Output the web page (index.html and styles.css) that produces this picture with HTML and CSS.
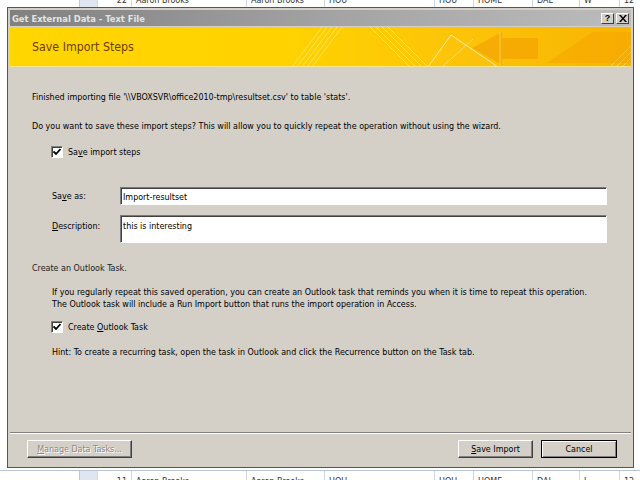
FILE: index.html
```html
<!DOCTYPE html>
<html lang="en">
<head>
    <meta charset="UTF-8">
    <title>Get External Data - Text File</title>
    <link rel="stylesheet" href="styles.css">
</head>
<body>

    <!-- spreadsheet behind the dialog -->
    <div class="sheet">
        <div class="sheet-row sheet-top">
            <span class="cell c0"></span>
            <span class="cell c1 rh"></span>
            <span class="cell c2 num">22</span>
            <span class="cell c3">Aaron Brooks</span>
            <span class="cell c4">Aaron Brooks</span>
            <span class="cell c5">HOU</span>
            <span class="cell c6">HOU</span>
            <span class="cell c7">HOME</span>
            <span class="cell c8">DAL</span>
            <span class="cell c9">W</span>
            <span class="cell c10">12</span>
        </div>
        <div class="sheet-row sheet-bottom">
            <span class="cell c0"></span>
            <span class="cell c1 rh"></span>
            <span class="cell c2 num">11</span>
            <span class="cell c3">Aaron Brooks</span>
            <span class="cell c4">Aaron Brooks</span>
            <span class="cell c5">HOU</span>
            <span class="cell c6">HOU</span>
            <span class="cell c7">HOME</span>
            <span class="cell c8">DAL</span>
            <span class="cell c9">L</span>
            <span class="cell c10">12</span>
        </div>
    </div>

    <div class="dialog">
        <div class="titlebar">
            <span class="title">Get External Data - Text File</span>
            <div class="title-btns">
                <span class="tbtn">?</span>
                <span class="tbtn">
                    <svg width="8" height="7" viewBox="0 0 8 7"><path d="M0 0h2l2 2.5L6 0h2L5 3.5 8 7H6L4 4.5 2 7H0l3-3.5z" fill="#000"/></svg>
                </span>
            </div>
        </div>

        <div class="banner">
            <svg class="banner-art" width="622" height="40" viewBox="0 0 622 40">
                <defs>
                    <linearGradient id="bg" x1="0" x2="1" y1="0" y2="0">
                        <stop offset="0" stop-color="#ffd600"/>
                        <stop offset="0.45" stop-color="#ffd200"/>
                        <stop offset="0.75" stop-color="#fcc20a"/>
                        <stop offset="1" stop-color="#f8b400"/>
                    </linearGradient>
                </defs>
                <rect width="622" height="40" fill="url(#bg)"/>
                <g stroke="#fff3a0" stroke-opacity="0.55" stroke-width="1">
                    <path d="M282 40L312 0M287 40L317 0M292 40L322 0M297 40L327 0M302 40L332 0"/>
                    <path d="M360 0L400 40M366 0L406 40M372 0L412 40M378 0L418 40"/>
                    <path d="M600 40L622 18M606 40L622 24M612 40L622 30"/>
                </g>
                <polygon points="537,36 583,5 622,5 622,36" fill="#f4a200" fill-opacity="0.45"/>
                <polygon points="462,21 492,5 492,11 528,11 528,32 492,32 492,38" fill="#f29a00" fill-opacity="0.55"/>
                <path d="M490 5V38" stroke="#ffe27a" stroke-opacity="0.6"/>
                <polyline points="418,40 441,8 488,40" fill="none" stroke="#fff6c8" stroke-opacity="0.8"/>
                <path d="M432 40L463 12" stroke="#fff6c8" stroke-opacity="0.5"/>
            </svg>
            <h1>Save Import Steps</h1>
        </div>

        <div class="content">
            <p class="msg">Finished importing file '\\VBOXSVR\office2010-tmp\resultset.csv' to table 'stats'.</p>
            <p class="msg msg-second">Do you want to save these import steps? This will allow you to quickly repeat the operation without using the wizard.</p>

            <div class="check check-save">
                <span class="box">
                    <svg width="8" height="8" viewBox="0 0 8 8"><path d="M0.5 3.5l2.5 2.5 4.5-5" fill="none" stroke="#000" stroke-width="1.8"/></svg>
                </span>
                <span>Sa<u>v</u>e import steps</span>
            </div>

            <div class="fields">
                <div class="field">
                    <label for="save-as">Sa<u>v</u>e as:</label>
                    <input type="text" id="save-as" value="Import-resultset">
                </div>
                <div class="field field-tall">
                    <label for="description"><u>D</u>escription:</label>
                    <textarea id="description">this is interesting</textarea>
                </div>
            </div>

            <p class="section">Create an Outlook Task.</p>

            <div class="indent">
                <p>If you regularly repeat this saved operation, you can create an Outlook task that reminds you when it is time to repeat this operation.<br>The Outlook task will include a Run Import button that runs the import operation in Access.</p>

                <div class="check check-outlook">
                    <span class="box">
                        <svg width="8" height="8" viewBox="0 0 8 8"><path d="M0.5 3.5l2.5 2.5 4.5-5" fill="none" stroke="#000" stroke-width="1.8"/></svg>
                    </span>
                    <span>Create <u>O</u>utlook Task</span>
                </div>

                <p class="hint">Hint: To create a recurring task, open the task in Outlook and click the Recurrence button on the Task tab.</p>
            </div>
        </div>

        <div class="footer">
            <button class="btn btn-manage" disabled><u>M</u>anage Data Tasks...</button>
            <span class="spacer"></span>
            <button class="btn btn-save"><u>S</u>ave Import</button>
            <button class="btn btn-default">Cancel</button>
        </div>
    </div>

</body>
</html>
```

FILE: styles.css
```css
* {
    margin: 0;
    padding: 0;
    box-sizing: border-box;
}

body {
    width: 640px;
    height: 480px;
    overflow: hidden;
    background: #fff;
    font-family: 'DejaVu Sans Condensed', 'Liberation Sans', sans-serif;
    font-size: 8.9px;
    color: #000;
    position: relative;
}

/* Spreadsheet under the dialog */
.sheet {
    position: absolute;
    inset: 0;
    display: flex;
    flex-direction: column;
    justify-content: space-between;
    color: #333;
}

.sheet-row {
    display: flex;
    height: 12px;
    overflow: hidden;
}

.sheet-top {
    height: 8px;
    align-items: flex-start;
}

.sheet-top .cell {
    height: 14px;
    padding-top: 0;
    margin-top: -5px;
}

.sheet-bottom {
    height: 10px;
    border-top: 1px solid #b7c6d8;
}

.cell {
    height: 100%;
    padding: 5px 4px 0;
    border-right: 1px solid #d0d7e2;
    white-space: nowrap;
}

.c0 { width: 80px; border-right-color: #c0c8d4; }
.c1 { width: 18px; }
.c2 { width: 34px; }
.c3 { width: 115px; }
.c4 { width: 78px; }
.c5 { width: 110px; }
.c6 { width: 39px; }
.c7 { width: 59px; }
.c8 { width: 47px; }
.c9 { width: 40px; }
.c10 { width: 20px; border-right: none; }

.rh {
    background: #dfe6ef;
}

.num {
    text-align: right;
}

/* Dialog window */
.dialog {
    position: absolute;
    left: 7px;
    top: 7px;
    width: 627px;
    height: 461px;
    border: 1px solid #555;
    padding: 2px;
    background: #d4d0c8;
    display: flex;
    flex-direction: column;
}

.titlebar {
    height: 16px;
    display: flex;
    align-items: center;
    justify-content: space-between;
    padding: 0 2px;
    background: linear-gradient(to right, #808080, #a2a2a2 50%, #bcbcbc);
}

.title {
    color: #e4e4e4;
    font-weight: bold;
    font-size: 9.3px;
}

.title-btns {
    display: flex;
    gap: 2px;
}

.tbtn {
    width: 13px;
    height: 11px;
    display: flex;
    align-items: center;
    justify-content: center;
    background: #d4d0c8;
    border: 1px solid;
    border-color: #fff #404040 #404040 #fff;
    font-family: 'Liberation Sans', sans-serif;
    font-weight: bold;
    font-size: 9px;
    line-height: 1;
}

.banner {
    position: relative;
    height: 40px;
    margin-top: 1px;
    display: flex;
    align-items: center;
    padding-left: 22px;
    border-bottom: 1px solid #ffe98a;
    overflow: hidden;
}

.banner-art {
    position: absolute;
    left: 0;
    top: 0;
}

.banner h1 {
    position: relative;
    font-weight: normal;
    font-size: 12.3px;
    color: #6e3f00;
}

/* Main body */
.content {
    flex: 1;
    padding: 24px 24px 0 22px;
    line-height: 12px;
}

.msg-second {
    margin-top: 17px;
}

.check {
    display: flex;
    align-items: center;
    gap: 5px;
    height: 12px;
    margin-left: 19px;
}

.check-save {
    margin-top: 14px;
}

.box {
    width: 12px;
    height: 12px;
    display: flex;
    align-items: center;
    justify-content: center;
    background: #fff;
    border: 1px solid;
    border-color: #808080 #fff #fff #808080;
    box-shadow: inset 1px 1px 0 #404040;
}

.fields {
    margin-top: 29px;
    margin-left: 20px;
    display: flex;
    flex-direction: column;
    gap: 10px;
}

.field {
    display: flex;
    align-items: center;
}

.field label {
    width: 68px;
}

.field-tall {
    align-items: flex-start;
}

.field-tall label {
    padding-top: 5px;
}

.field input,
.field textarea {
    flex: 1;
    height: 18px;
    padding: 2px 2px 0;
    background: #fff;
    border: 1px solid;
    border-color: #7a7a7a #fff #fff #7a7a7a;
    box-shadow: inset 0 1px 0 #404040, inset 1px 0 0 #404040;
    font-family: inherit;
    font-size: 8.9px;
    color: #000;
    outline: none;
}

.field textarea {
    height: 28px;
    padding-top: 4px;
    resize: none;
    overflow: hidden;
    line-height: 12px;
}

.section {
    margin-top: 19px;
    color: #222;
}

.indent {
    margin-top: 12px;
    margin-left: 20px;
}

.indent .check {
    margin-left: -1px;
}

.check-outlook {
    margin-top: 11px;
}

.hint {
    margin-top: 13px;
}

/* Button row */
.footer {
    height: 33px;
    display: flex;
    align-items: flex-start;
    gap: 8px;
    padding: 7px 14px 0 17px;
    border-top: 1px solid #808080;
    box-shadow: inset 0 1px 0 #fff;
}

.spacer {
    flex: 1;
}

.btn {
    height: 18px;
    background: #d4d0c8;
    border: 1px solid;
    border-color: #fff #404040 #404040 #fff;
    box-shadow: inset -1px -1px 0 #808080;
    font-family: inherit;
    font-size: 8.9px;
    color: #000;
}

.btn-manage {
    width: 105px;
    color: #8a8a8a;
    text-shadow: 1px 1px 0 #fff;
}

.btn-save {
    width: 75px;
}

.btn-default {
    width: 76px;
    border-color: #000;
    box-shadow: inset 1px 1px 0 #fff, inset -1px -1px 0 #808080;
}
```
